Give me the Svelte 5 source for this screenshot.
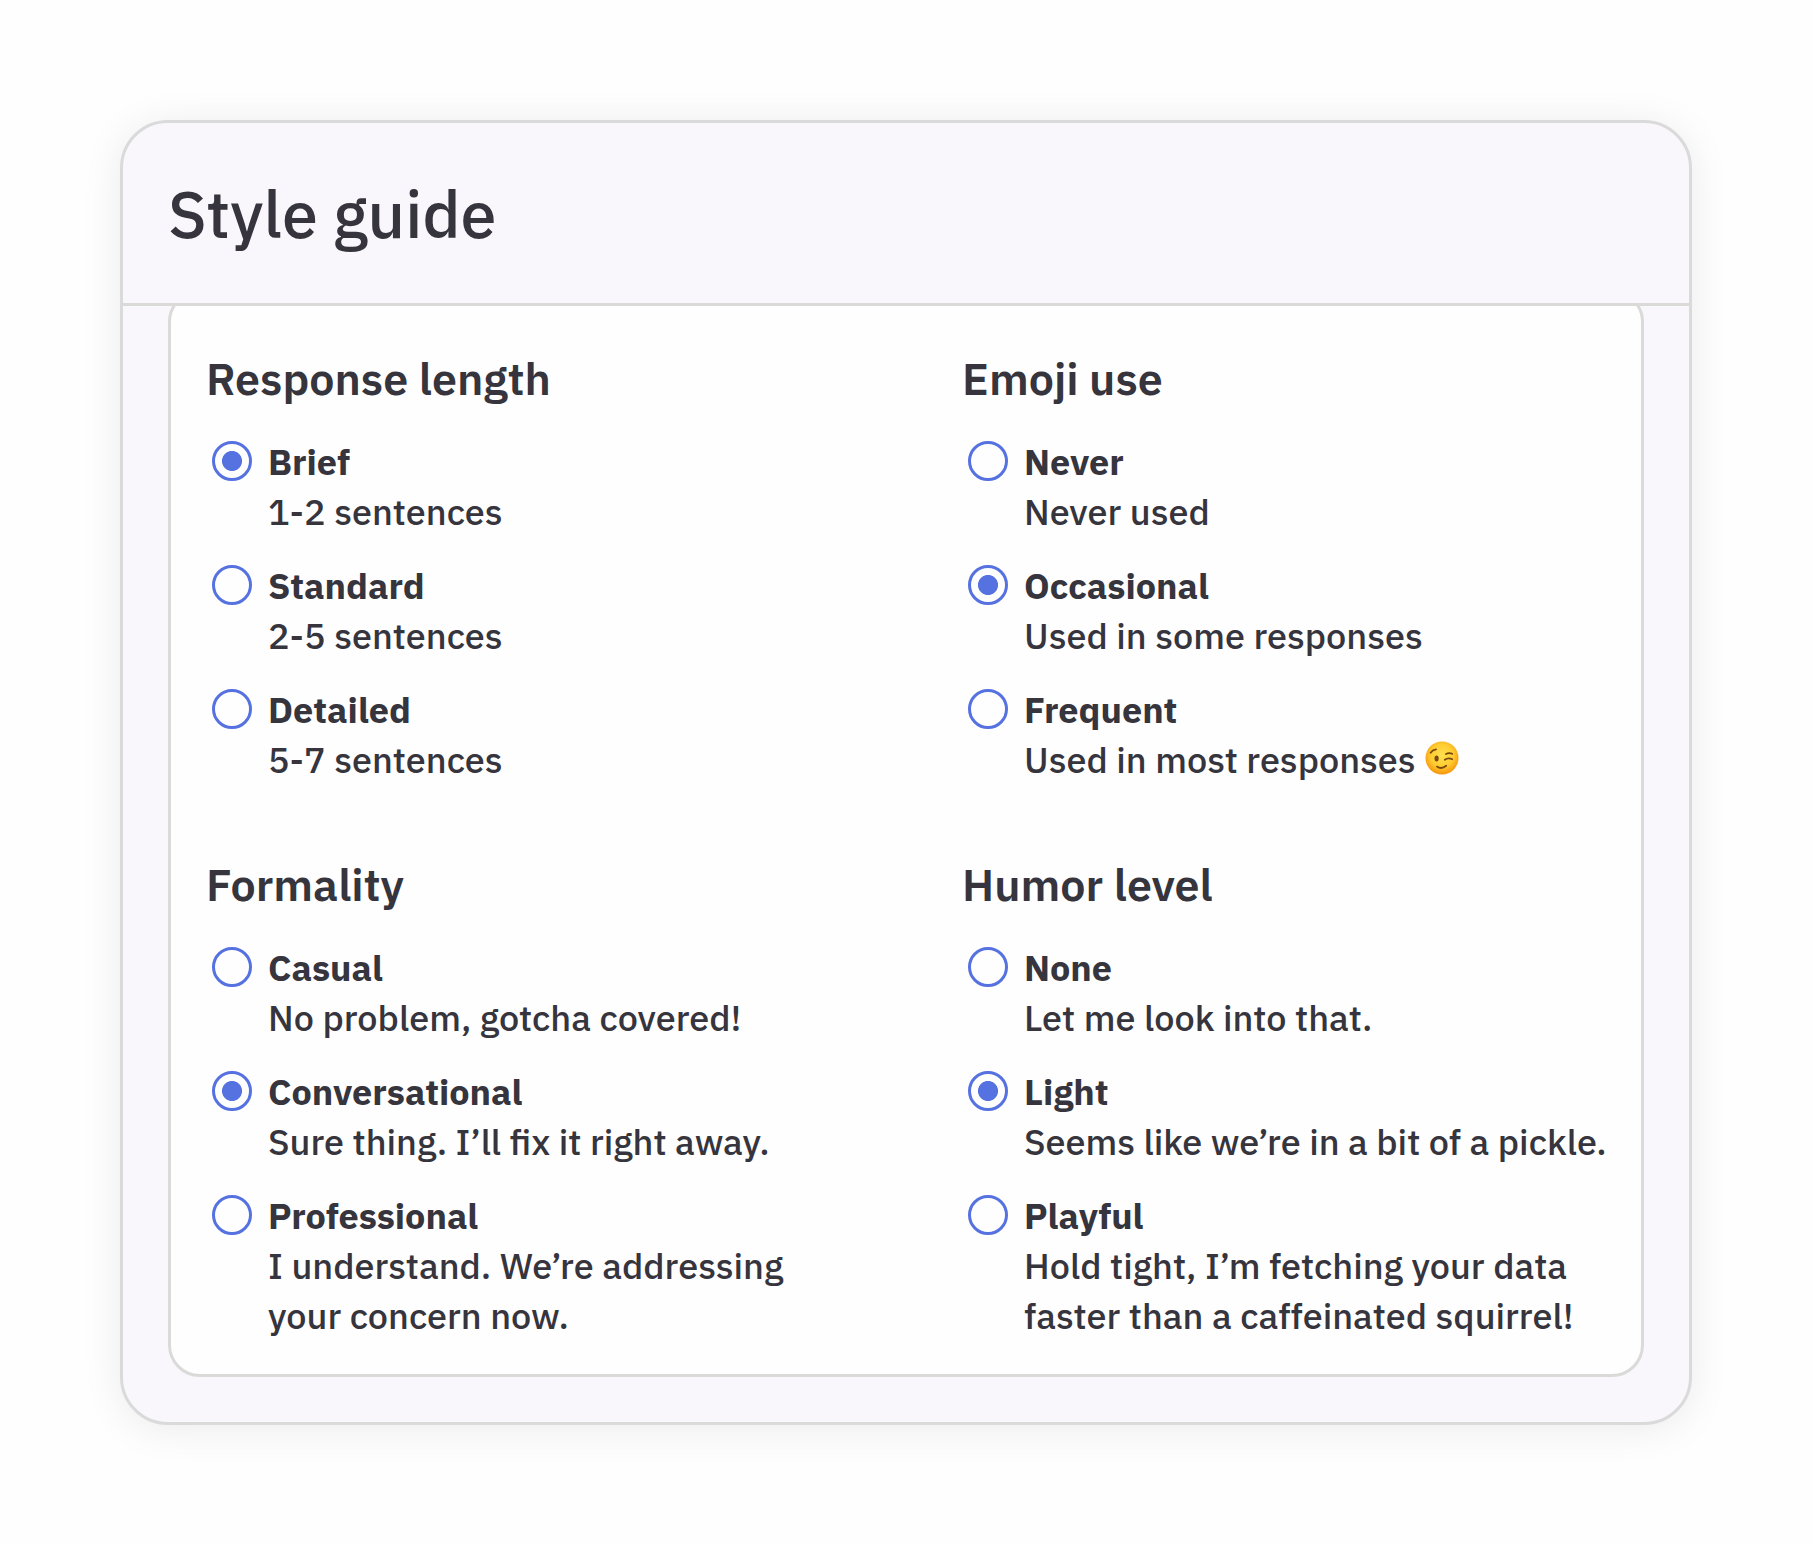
<script lang="ts">
  type Option = { label: string; lines: string[]; emoji?: boolean };
  type Group = { title: string; selected: string; options: Option[] };

  let groups: Group[] = $state([
    {
      title: "Response length",
      selected: "Brief",
      options: [
        { label: "Brief", lines: ["1-2 sentences"] },
        { label: "Standard", lines: ["2-5 sentences"] },
        { label: "Detailed", lines: ["5-7 sentences"] },
      ],
    },
    {
      title: "Emoji use",
      selected: "Occasional",
      options: [
        { label: "Never", lines: ["Never used"] },
        { label: "Occasional", lines: ["Used in some responses"] },
        { label: "Frequent", lines: ["Used in most responses"], emoji: true },
      ],
    },
    {
      title: "Formality",
      selected: "Conversational",
      options: [
        { label: "Casual", lines: ["No problem, gotcha covered!"] },
        { label: "Conversational", lines: ["Sure thing. I’ll fix it right away."] },
        { label: "Professional", lines: ["I understand. We’re addressing", "your concern now."] },
      ],
    },
    {
      title: "Humor level",
      selected: "Light",
      options: [
        { label: "None", lines: ["Let me look into that."] },
        { label: "Light", lines: ["Seems like we’re in a bit of a pickle."] },
        { label: "Playful", lines: ["Hold tight, I’m fetching your data", "faster than a caffeinated squirrel!"] },
      ],
    },
  ]);
</script>

<main>
  <div class="card">
    <header>
      <h1>Style guide</h1>
    </header>
    <div class="body">
      <div class="panel">
        {#each groups as group}
          <section>
            <h2>{group.title}</h2>
            {#each group.options as option}
              <label>
                <input type="radio" name={group.title} value={option.label} bind:group={group.selected} />
                <span class="text">
                  <strong>{option.label}</strong>
                  {#each option.lines as line}
                    <span class="line">
                      {line}
                      {#if option.emoji}
                        <svg class="wink" viewBox="0 0 34 34">
                          <defs>
                            <radialGradient id="face" cx="0.5" cy="0.42" r="0.58">
                              <stop offset="0" stop-color="#ffe052" />
                              <stop offset="0.6" stop-color="#ffcb30" />
                              <stop offset="1" stop-color="#f5930c" />
                            </radialGradient>
                          </defs>
                          <circle cx="17" cy="17" r="16.5" fill="url(#face)" />
                          <ellipse cx="11.6" cy="17.6" rx="2.1" ry="3" fill="#7a4a0c" />
                          <path d="M5.6 11.8q1.8-2.8 5.4-3.4M21 13q3-1.6 6.2-.2M19.8 18.8q3.4-2.6 7.4-.6" />
                          <path d="M12 25.6q4.4 3.2 9.2-.8" />
                        </svg>
                      {/if}
                    </span>
                  {/each}
                </span>
              </label>
            {/each}
          </section>
        {/each}
      </div>
    </div>
  </div>
</main>

<style>
  :global(body) {
    background: #fefefe;
  }

  main {
    box-sizing: border-box;
    width: 1812px;
    height: 1545px;
    padding: 120px;
    color: #36343d;
    font-family: "IBM Plex Sans", "Open Sans", sans-serif;
  }

  .card {
    box-sizing: border-box;
    display: flex;
    flex-direction: column;
    height: 1305px;
    border: 3px solid #dadada;
    border-radius: 48px;
    background: #f9f7fb;
    box-shadow: 0 4px 40px rgba(0, 0, 0, 0.08);
    overflow: hidden;
  }

  header {
    box-sizing: border-box;
    display: flex;
    align-items: center;
    height: 183px;
    padding: 1px 45px 0;
    border-bottom: 3px solid #dadad9;
  }

  h1 {
    margin: 0;
    font-size: 64.7px;
    font-weight: 500;
    line-height: 80px;
  }

  .body {
    flex: 1;
    padding: 0 45px 45px;
    overflow: hidden;
  }

  /* the panel is scrolled slightly under the header */
  .panel {
    box-sizing: border-box;
    display: grid;
    grid-template-columns: 756px 1fr;
    align-content: start;
    row-gap: 69px;
    height: 1087px;
    margin-top: -16px;
    padding: 55px 0 0 35px;
    border: 3px solid #dadad8;
    border-radius: 32px;
    background: #fefefe;
  }

  h2 {
    margin: 0 0 29px;
    font-size: 44.8px;
    font-weight: 600;
    line-height: 60px;
    white-space: nowrap;
  }

  label {
    display: flex;
    gap: 16px;
    margin-bottom: 24px;
    padding-left: 6px;
  }

  label:last-child {
    margin-bottom: 0;
  }

  input {
    appearance: none;
    flex: none;
    box-sizing: border-box;
    width: 40px;
    height: 40px;
    margin: 4px 0 0;
    border: 3px solid #5671e0;
    border-radius: 50%;
  }

  input:checked {
    background: radial-gradient(circle, #5671e0 9.6px, transparent 10.4px);
  }

  .text {
    font-size: 36px;
    font-weight: 500;
    line-height: 50px;
    white-space: nowrap;
  }

  strong,
  .line {
    display: block;
  }

  strong {
    font-weight: 700;
  }

  .wink {
    width: 34px;
    height: 34px;
    margin-left: 1px;
    vertical-align: -2px;
  }

  .wink path {
    fill: none;
    stroke: #7a4a0c;
    stroke-width: 1.8;
    stroke-linecap: round;
  }
</style>
